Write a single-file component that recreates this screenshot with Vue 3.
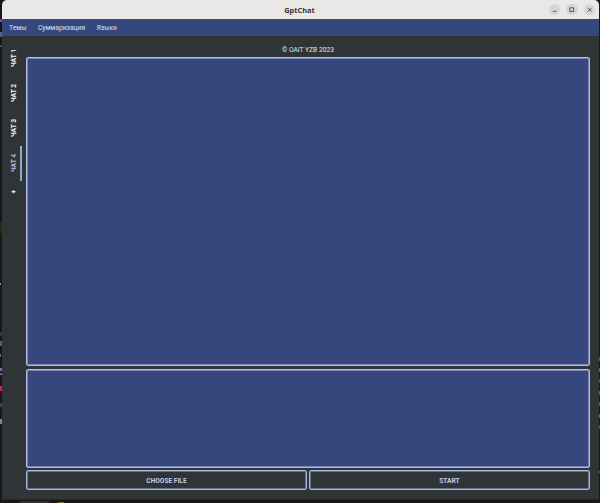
<script setup>
import { ref } from 'vue'

const menus = ['Темы', 'Суммаризация', 'Языки']
const tabs = ['ЧАТ 1', 'ЧАТ 2', 'ЧАТ 3', 'ЧАТ 4']
const active = ref(3)

const behind = [
  { x: 0, y: 19, w: 2, h: 3, c: '#59616b' },
  { x: 0, y: 32, w: 2, h: 5, c: '#3f6f88' },
  { x: 0, y: 45, w: 2, h: 2, c: '#4b545a' },
  { x: 0, y: 222, w: 2, h: 11, c: '#2d2a12' },
  { x: 0, y: 283, w: 1, h: 2, c: '#8b9094' },
  { x: 0, y: 332, w: 2, h: 4, c: '#34383c' },
  { x: 0, y: 341, w: 2, h: 5, c: '#5c6064' },
  { x: 0, y: 354, w: 1, h: 3, c: '#4a7f96' },
  { x: 0, y: 368, w: 2, h: 3, c: '#9a5cb0' },
  { x: 0, y: 373, w: 2, h: 2, c: '#8a56a0' },
  { x: 0, y: 386, w: 2, h: 5, c: '#d81e48' },
  { x: 0, y: 403, w: 2, h: 4, c: '#3c4566' },
  { x: 0, y: 419, w: 2, h: 5, c: '#8d7cae' },
  { x: 599, y: 357, w: 1, h: 4, c: '#555a5c' },
  { x: 599, y: 368, w: 1, h: 4, c: '#65625a' },
  { x: 599, y: 379, w: 1, h: 4, c: '#4d5354' },
  { x: 599, y: 391, w: 1, h: 4, c: '#65625a' },
  { x: 599, y: 402, w: 1, h: 4, c: '#555a5c' },
  { x: 599, y: 414, w: 1, h: 4, c: '#65625a' },
  { x: 599, y: 425, w: 1, h: 4, c: '#4d5354' },
  { x: 599, y: 471, w: 1, h: 2, c: '#55595b' },
  { x: 20, y: 501, w: 29, h: 2, c: '#2e2f31' },
  { x: 58, y: 502, w: 6, h: 1, c: '#8a6b0c' }
]
</script>

<template>
  <div class="desktop">
    <i
      v-for="(b, i) in behind"
      :key="i"
      class="speck"
      :style="{ left: b.x + 'px', top: b.y + 'px', width: b.w + 'px', height: b.h + 'px', background: b.c }"
    ></i>
    <main class="window">
      <header class="titlebar">
        <span></span>
        <h1>GptChat</h1>
        <div class="controls">
          <button aria-label="Minimize">
            <svg viewBox="0 0 12 12"><path d="M4 7.7h4" /></svg>
          </button>
          <button aria-label="Maximize">
            <svg viewBox="0 0 12 12"><path d="M4 4h4v4h-4z" /></svg>
          </button>
          <button aria-label="Close">
            <svg viewBox="0 0 12 12"><path d="M4 4l4 4M8 4l-4 4" /></svg>
          </button>
        </div>
      </header>
      <nav class="menubar">
        <a v-for="m in menus" :key="m">{{ m }}</a>
      </nav>
      <div class="body">
        <aside class="tabs">
          <button
            v-for="(t, i) in tabs"
            :key="t"
            class="tab"
            :class="{ active: i === active }"
            @click="active = i"
          >
            <span>{{ t }}</span>
          </button>
          <button class="tab add"><span>+</span></button>
        </aside>
        <section class="chat">
          <p class="copyright">© OAIT YZB 2023</p>
          <div class="panel history"></div>
          <div class="panel prompt"></div>
          <div class="actions">
            <button>CHOOSE FILE</button>
            <button>START</button>
          </div>
        </section>
      </div>
    </main>
  </div>
</template>

<style>
body {
  background: #15171a;
  overflow: hidden;
}
</style>

<style scoped>
* {
  box-sizing: border-box;
}
button {
  margin: 0;
  padding: 0;
  border: 0;
  background: none;
  font: inherit;
  color: inherit;
}
.desktop {
  position: relative;
  width: 600px;
  height: 503px;
  padding: 0 1px 3px 2px;
  background: #15171a;
  font-family: Roboto, "Liberation Sans", sans-serif;
  font-size: 6.5px;
}
.speck {
  position: absolute;
}
.window {
  display: flex;
  flex-direction: column;
  height: 500px;
  border-radius: 5px 5px 0 0;
  overflow: hidden;
  background: #2f3437;
  border-bottom: 1px solid #25292c;
}
.titlebar {
  display: grid;
  grid-template-columns: 1fr auto 1fr;
  align-items: center;
  height: 19px;
  padding-right: 4px;
  background: #e9e8e6;
}
.titlebar h1 {
  margin: 0;
  padding-left: 2px;
  font: 700 7.4px/18px "Open Sans", "Noto Sans", sans-serif;
  color: #353535;
}
.controls {
  display: flex;
  justify-content: flex-end;
  gap: 6px;
}
.controls button {
  display: flex;
  width: 11.4px;
  height: 11.4px;
  border-radius: 50%;
  background: #d7d6d4;
}
.controls svg {
  width: 100%;
  height: 100%;
  fill: none;
  stroke: #414141;
  stroke-width: 0.9;
}
.menubar {
  display: flex;
  gap: 11.5px;
  height: 17px;
  padding: 1px 0 0 7px;
  background: #35477c;
  color: #dbe1f7;
  font-size: 6.7px;
  line-height: 17px;
}
.body {
  display: flex;
  flex: 1;
  min-height: 0;
}
.tabs {
  display: flex;
  flex-direction: column;
  width: 24px;
  padding-top: 5px;
}
.tab {
  display: flex;
  align-items: center;
  justify-content: center;
  width: 20px;
  height: 34.9px;
  padding-left: 5px;
  border-right: 2px solid transparent;
  color: #f6f6f6;
  font-size: 6.6px;
  font-weight: 700;
}
.tab span {
  writing-mode: vertical-rl;
  transform: rotate(180deg);
  line-height: 8px;
}
.tab.active {
  color: #b4bfe6;
  border-right-color: #98a5cf;
}
.tab.add {
  height: 22px;
  font-weight: 700;
}
.chat {
  display: flex;
  flex: 1;
  flex-direction: column;
  padding: 9px 9px 9px 0;
}
.copyright {
  height: 12px;
  margin: 0;
  padding-top: 1px;
  text-align: center;
  font-size: 6.7px;
  line-height: 9px;
  color: #e2e5f1;
}
.panel {
  border: 1px solid #aebce0;
  border-radius: 2px;
  background: #35477c;
  box-shadow: inset 0 0 0 1px #7688b8;
}
.history {
  height: 309px;
}
.prompt {
  height: 99px;
  margin-top: 3px;
}
.actions {
  display: grid;
  grid-template-columns: 281px 1fr;
  gap: 2px;
  height: 20px;
  margin-top: 2px;
}
.actions button {
  padding-top: 1px;
  border: 1px solid #a9b6e0;
  border-radius: 2px;
  box-shadow: inset 0 0 0 1px #67708c;
  color: #c4cdf0;
  font-size: 6.6px;
  font-weight: 700;
}
</style>
